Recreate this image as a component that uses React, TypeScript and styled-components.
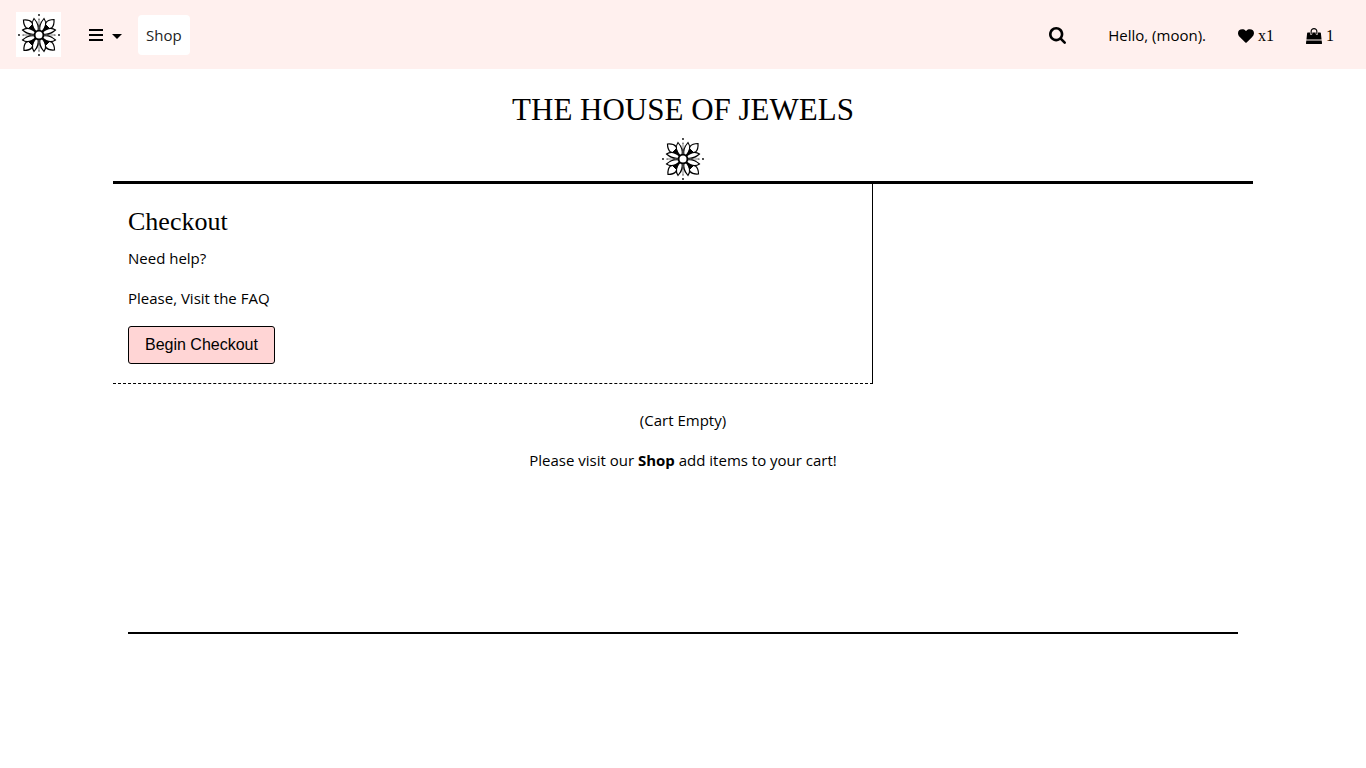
import React from "react";
import styled, { createGlobalStyle } from "styled-components";

const GlobalStyle = createGlobalStyle`
  *, *::before, *::after { box-sizing: border-box; }
  body {
    margin: 0;
    background: #fff;
    color: #000;
    font-family: "Open Sans", sans-serif;
    font-size: 15px;
    font-weight: 400;
    line-height: 24px;
  }
  a { color: inherit; text-decoration: none; }
`;

const serif = `"Liberation Serif", serif`;

const NavBar = styled.nav`
  display: flex;
  align-items: center;
  height: 69px;
  padding: 0 32px 0 16px;
  background: #fff0ee;
`;

const NavGroup = styled.div<{ $end?: boolean }>`
  display: flex;
  align-items: center;
  gap: ${(p) => (p.$end ? "32px" : "16px")};
  margin-left: ${(p) => (p.$end ? "auto" : "0")};
`;

const LogoLink = styled.a`
  display: flex;
  align-items: center;
  justify-content: center;
  width: 45px;
  height: 45px;
  background: #fff;
`;

const IconButton = styled.button`
  display: flex;
  align-items: center;
  gap: 9px;
  padding: 10px 10px 8px;
  border: 0;
  background: none;
  color: inherit;
`;

const MenuButton = styled(IconButton)`
  margin-left: 12px;
  padding: 8px 0;
`;

const Caret = styled.span`
  margin-top: 4px;
  border: 5px solid transparent;
  border-top-color: #000;
  border-bottom: 0;
`;

const ShopLink = styled.a`
  padding: 8px;
  border-radius: 4px;
  background: #fff;
  color: #222;
`;

const CountLink = styled.a`
  display: flex;
  align-items: center;
  gap: 4px;
  padding-top: 2px;
  font-family: ${serif};
  font-size: 16px;
`;

const Container = styled.main`
  max-width: 1140px;
  margin: 0 auto;
`;

const Brand = styled.header`
  display: flex;
  flex-direction: column;
  align-items: center;
  gap: 8px;
  padding: 21px 0 1px;
  border-bottom: 3px solid #000;
`;

const Title = styled.h1`
  margin: 0;
  font-family: ${serif};
  font-size: 31px;
  font-weight: 400;
  line-height: 40px;
`;

const CheckoutPanel = styled.section`
  width: calc(100% * 2 / 3);
  padding: 21px 15px 19px;
  border-right: 1px solid #000;
  border-bottom: 1px dashed #000;
`;

const Heading = styled.h2`
  margin: 0 0 7px;
  font-family: ${serif};
  font-size: 26px;
  font-weight: 400;
  line-height: 34px;
`;

const Paragraph = styled.p`
  margin: 0 0 16px;
`;

const CheckoutButton = styled.button`
  display: block;
  height: 38px;
  padding: 0 16px;
  border: 1px solid #000;
  border-radius: 3px;
  background: #ffd5d5;
  color: #000;
  font-family: "Liberation Sans", sans-serif;
  font-size: 16px;
`;

const EmptyCart = styled.section`
  min-height: 250px;
  margin: 0 15px;
  padding-top: 24px;
  border-bottom: 2px solid #000;
  text-align: center;
`;

const ShopInline = styled.a`
  font-weight: 700;
`;

const quarters = [0, 90, 180, 270];

function Flower() {
  return (
    <svg width="42" height="42" viewBox="-21 -21 42 42" fill="#fff" stroke="#000" aria-hidden="true">
      {quarters.map((a) => (
        <g key={a} transform={`rotate(${a})`}>
          <path d="M4 -4L7 -12.500Q9.500 -15.500 15 -15.500Q15.500 -9.500 12.500 -7Z" strokeWidth="1.200" />
          <path d="M3 -3L6 -11L8 -9L11 -6Z" fill="#000" strokeWidth="1" />
          <path d="M0 -4V-16M0 -8L-2.500 -14M0 -8L2.500 -14" strokeWidth=".5" />
          <circle cy="-16" r=".6" fill="#000" stroke="none" />
          <circle cy="-20" r=".9" fill="#000" stroke="none" />
        </g>
      ))}
      {quarters.map((a) => (
        <g key={a} transform={`rotate(${a})`} strokeWidth="1.100">
          <path d="M1 -4C0 -9 2 -13 5 -16.500C7.500 -13 6.800 -8 3 -3.500Z" />
          <path d="M-1 -4C0 -9 -2 -13 -5 -16.500C-7.500 -13 -6.800 -8 -3 -3.500Z" />
        </g>
      ))}
      <circle r="4.400" strokeWidth="1.800" />
    </svg>
  );
}

function BarsIcon() {
  return (
    <svg width="14" height="12" viewBox="0 0 14 12" aria-hidden="true">
      <path d="M0 1h14M0 6h14M0 11h14" stroke="#000" strokeWidth="2" />
    </svg>
  );
}

function SearchIcon() {
  return (
    <svg width="17" height="17" viewBox="0 0 1664 1664" aria-hidden="true">
      <path d="M1152 704q0-185-131.500-316.500T704 256 387.500 387.500 256 704t131.500 316.500T704 1152t316.500-131.500T1152 704zm512 832q0 52-38 90t-90 38q-54 0-90-38l-343-342q-179 124-399 124-143 0-273.500-55.500t-225-150-150-225T0 704t55.500-273.500 150-225 225-150T704 0t273.500 55.500 225 150 150 225T1408 704q0 220-124 399l343 343q37 37 37 90z" />
    </svg>
  );
}

function HeartIcon() {
  return (
    <svg width="16" height="16" viewBox="0 0 1792 1792" aria-hidden="true">
      <path d="M896 1664q-26 0-44-18L228 1044q-10-8-27.500-26T145 952.500 77 855 23.500 734 0 596q0-220 127-344t351-124q62 0 126.500 21.500t120 58T820 276t76 68q36-36 76-68t95.500-68.500 120-58T1314 128q224 0 351 124t127 344q0 221-229 450l-623 600q-18 18-44 18z" />
    </svg>
  );
}

function BagIcon() {
  return (
    <svg width="16" height="16" viewBox="0 0 1792 1792" aria-hidden="true">
      <path d="M1757 1408l35 313q3 28-16 50-19 21-48 21H64q-29 0-48-21-19-22-16-50l35-313h1722z" />
      <path d="M1664 569l79 711H49l79-711q3-24 21-40.500t43-16.500h256v128q0 53 37.500 90.500t90.500 37.500 90.500-37.500 37.500-90.500V512h384v128q0 53 37.500 90.500t90.500 37.500 90.500-37.500 37.500-90.500V512h256q25 0 43 16.500t21 40.500z" />
      <path d="M1280 384v256q0 26-19 45t-45 19-45-19-19-45V384q0-106-75-181t-181-75-181 75-75 181v256q0 26-19 45t-45 19-45-19-19-45V384q0-159 112.500-271.500T896 0t271.500 112.500T1280 384z" />
    </svg>
  );
}

export default function App() {
  return (
    <>
      <GlobalStyle />
      <NavBar>
        <NavGroup>
          <LogoLink href="#" aria-label="Home"><Flower /></LogoLink>
          <MenuButton type="button" aria-label="Menu"><BarsIcon /><Caret /></MenuButton>
          <ShopLink href="#shop">Shop</ShopLink>
        </NavGroup>
        <NavGroup $end>
          <IconButton type="button" aria-label="Search"><SearchIcon /></IconButton>
          <a href="#account">Hello, (moon).</a>
          <CountLink href="#wishlist"><HeartIcon />x1</CountLink>
          <CountLink href="#cart"><BagIcon />1</CountLink>
        </NavGroup>
      </NavBar>
      <Container>
        <Brand>
          <Title>THE HOUSE OF JEWELS</Title>
          <Flower />
        </Brand>
        <CheckoutPanel>
          <Heading>Checkout</Heading>
          <Paragraph>Need help?</Paragraph>
          <Paragraph>Please, Visit the <a href="#faq">FAQ</a></Paragraph>
          <CheckoutButton type="button">Begin Checkout</CheckoutButton>
        </CheckoutPanel>
        <EmptyCart>
          <Paragraph>(Cart Empty)</Paragraph>
          <Paragraph>Please visit our <ShopInline href="#shop">Shop</ShopInline> add items to your cart!</Paragraph>
        </EmptyCart>
      </Container>
    </>
  );
}
